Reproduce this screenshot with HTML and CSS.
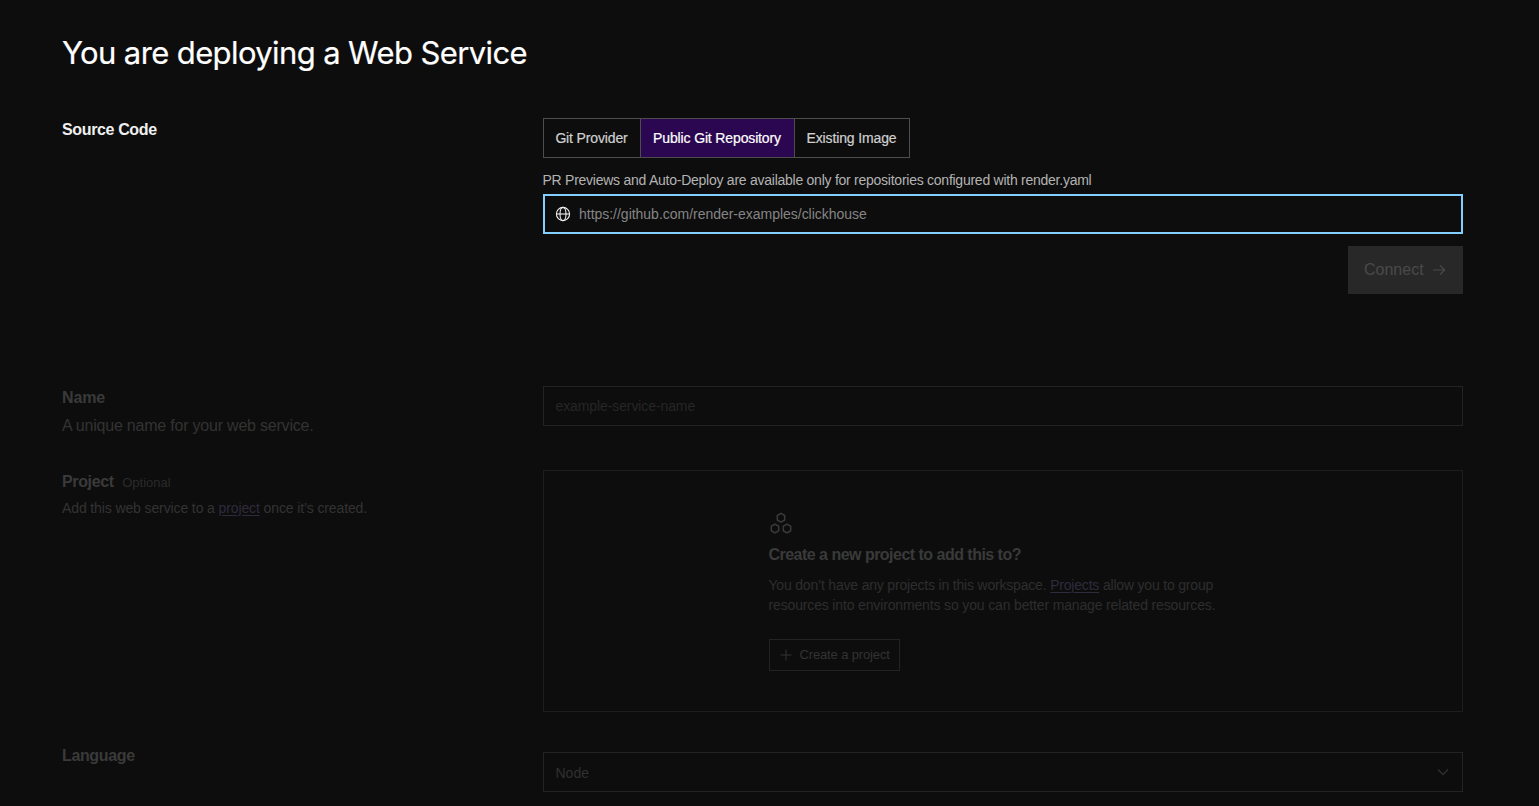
FILE: index.html
```html
<!DOCTYPE html>
<html lang="en">
<head>
<meta charset="utf-8">
<title>New Web Service</title>
<link rel="stylesheet" href="styles.css">
</head>
<body>
<main class="page">
  <h1 class="title">You are deploying a Web Service</h1>

  <section class="row row-source">
    <div class="info"><h2 class="label">Source Code</h2></div>
    <div class="field">
      <div class="tabs">
        <button class="tab">Git Provider</button>
        <button class="tab tab-active">Public Git Repository</button>
        <button class="tab">Existing Image</button>
      </div>
      <p class="note">PR Previews and Auto-Deploy are available only for repositories configured with render.yaml</p>
      <div class="input input-focus">
        <svg class="globe" viewBox="0 0 16 16"><circle cx="8" cy="8" r="6.600"/><ellipse cx="8" cy="8" rx="3" ry="6.600"/><path d="M1.400 8h13.200"/></svg>
        <span class="placeholder">https://github.com/render-examples/clickhouse</span>
      </div>
      <button class="connect">Connect<svg class="arrow" viewBox="0 0 16 16"><path d="M2 8h11.500M9 3.300 13.700 8 9 12.700"/></svg></button>
    </div>
  </section>

  <div class="pending">
    <section class="row row-name">
      <div class="info">
        <h2 class="label label-name">Name</h2>
        <p class="desc">A unique name for your web service.</p>
      </div>
      <div class="field"><div class="input"><span class="placeholder name-hint">example-service-name</span></div></div>
    </section>

    <section class="row row-project">
      <div class="info">
        <h2 class="label">Project<span class="optional">Optional</span></h2>
        <p class="desc-small">Add this web service to a <a class="link">project</a> once it’s created.</p>
      </div>
      <div class="field">
        <div class="panel">
          <div class="panel-body">
            <svg class="hexes" viewBox="0 0 24 24"><path d="M12 1.400 15.700 3.500v4.500L12 10.100 8.300 8V3.500zM6 12.200l3.700 2.100v4.400L6 20.800l-3.700-2.100v-4.400zM18 12.200l3.700 2.100v4.400L18 20.800l-3.700-2.100v-4.400z"/></svg>
            <h3 class="panel-title">Create a new project to add this to?</h3>
            <p class="panel-text">You don’t have any projects in this workspace. <a class="link">Projects</a> allow you to group<br><span class="panel-line">resources into environments so you can better manage related resources.</span></p>
            <button class="create"><svg class="plus" viewBox="0 0 12 12"><path d="M6 .5v11M.5 6h11"/></svg><span class="create-text">Create a project</span></button>
          </div>
        </div>
      </div>
    </section>

    <section class="row row-language">
      <div class="info"><h2 class="label label-language">Language</h2></div>
      <div class="field"><div class="input select"><span class="value">Node</span><svg class="chevron" viewBox="0 0 12 8"><path d="m1 1.500 5 5 5-5"/></svg></div></div>
    </section>
  </div>
</main>
</body>
</html>
```
FILE: styles.css
```css
* { box-sizing: border-box; }
body {
  margin: 0;
  background: #0d0d0d;
  color: #f0f0f0;
  font-family: "Liberation Sans", Arial, sans-serif;
  height: 806px;
  overflow: hidden;
}
h1, h2, h3, p { margin: 0; }
button { font: inherit; color: inherit; background: none; border: 0; padding: 0; border-radius: 0; white-space: nowrap; }
svg { fill: none; stroke: currentColor; flex: none; }

.page { padding: 33px 76px 0 62px; }
.title { font: 400 31px/40px Inter, sans-serif; letter-spacing: -.61px; color: #fff; -webkit-text-stroke: .2px; }
.row { display: grid; grid-template-columns: 481px 920px; }
.row-source { margin-top: 45px; height: 268px; }
.row-name { height: 84px; }
.row-project { height: 282px; }

.label { height: 24px; font-size: 16px; line-height: 24px; font-weight: 700; letter-spacing: -.36px; display: flex; align-items: center; }
.label-name { letter-spacing: -.15px; }
.label-language { margin-top: -8px; }
.tabs { display: inline-grid; grid-template-columns: 96px 154px 115px; height: 40px; border: 1px solid #4d4d4d; vertical-align: top; }
.tab { font-size: 14px; letter-spacing: -.14px; color: #d0d0d0; -webkit-text-stroke: .2px; padding-right: 1px; }
.tab + .tab { border-left: 1px solid #4d4d4d; }
.tab-active { background: #2b0751; color: #fff; }
.note { margin: 12px 0 4px -.5px; font-size: 14px; line-height: 20px; letter-spacing: -.253px; color: #b3b3b3; white-space: nowrap; }
.input { display: flex; align-items: center; height: 40px; border: 1px solid #232323; padding: 0 13px 0 11.5px; font-size: 14px; }
.input-focus { border: 2px solid #83cfff; padding: 0 10px; gap: 8px; }
.globe { width: 16px; height: 16px; stroke-width: 1.100; }
.placeholder { color: #858585; letter-spacing: -.02px; }
.name-hint { color: #262626; letter-spacing: -.1px; }
.connect { display: flex; align-items: center; gap: 7px; width: 115px; height: 48px; margin: 12px 0 0 auto; padding: 0 16px; background: #282828; color: #4a4a4a; font-size: 16px; }
.arrow { width: 16px; height: 16px; stroke-width: 1.200; }

.pending { color: #3a3a3a; }
.desc { margin-top: 4px; font-size: 16px; line-height: 24px; letter-spacing: -.21px; color: #333; }
.optional { margin-left: 8.5px; padding-top: 2px; font-size: 13px; font-weight: 400; letter-spacing: 0; color: #2a2a2a; }
.desc-small { margin-top: 4px; font-size: 14px; line-height: 20px; letter-spacing: -.115px; color: #333; }
.link { color: #2f2b3d; text-decoration: underline; text-underline-offset: 2px; }
.panel { height: 242px; border: 1px solid #1d1d1d; padding: 41px 0 0 224.5px; }
.panel-body { width: 470px; }
.hexes { display: block; width: 24px; height: 24px; stroke-width: 1.500; }
.panel-title { margin-top: 7px; font-size: 16px; line-height: 24px; letter-spacing: -.52px; }
.panel-text { margin-top: 8px; font-size: 14px; line-height: 20px; letter-spacing: -.19px; color: #2e2e2e; white-space: nowrap; }
.panel-line { letter-spacing: -.15px; }
.create { display: flex; align-items: center; gap: 7.5px; width: 131px; height: 32px; margin: 24px 0 0 .5px; padding: 0 10px; border: 1px solid #232323; font-size: 13px; letter-spacing: -.14px; color: #333; }
.create-text { padding-bottom: 1px; }
.plus { width: 12px; height: 12px; }
.select { justify-content: space-between; color: #303030; }
.value { padding-top: 2px; }
.chevron { width: 12px; height: 8px; stroke-width: 1.300; }
```
